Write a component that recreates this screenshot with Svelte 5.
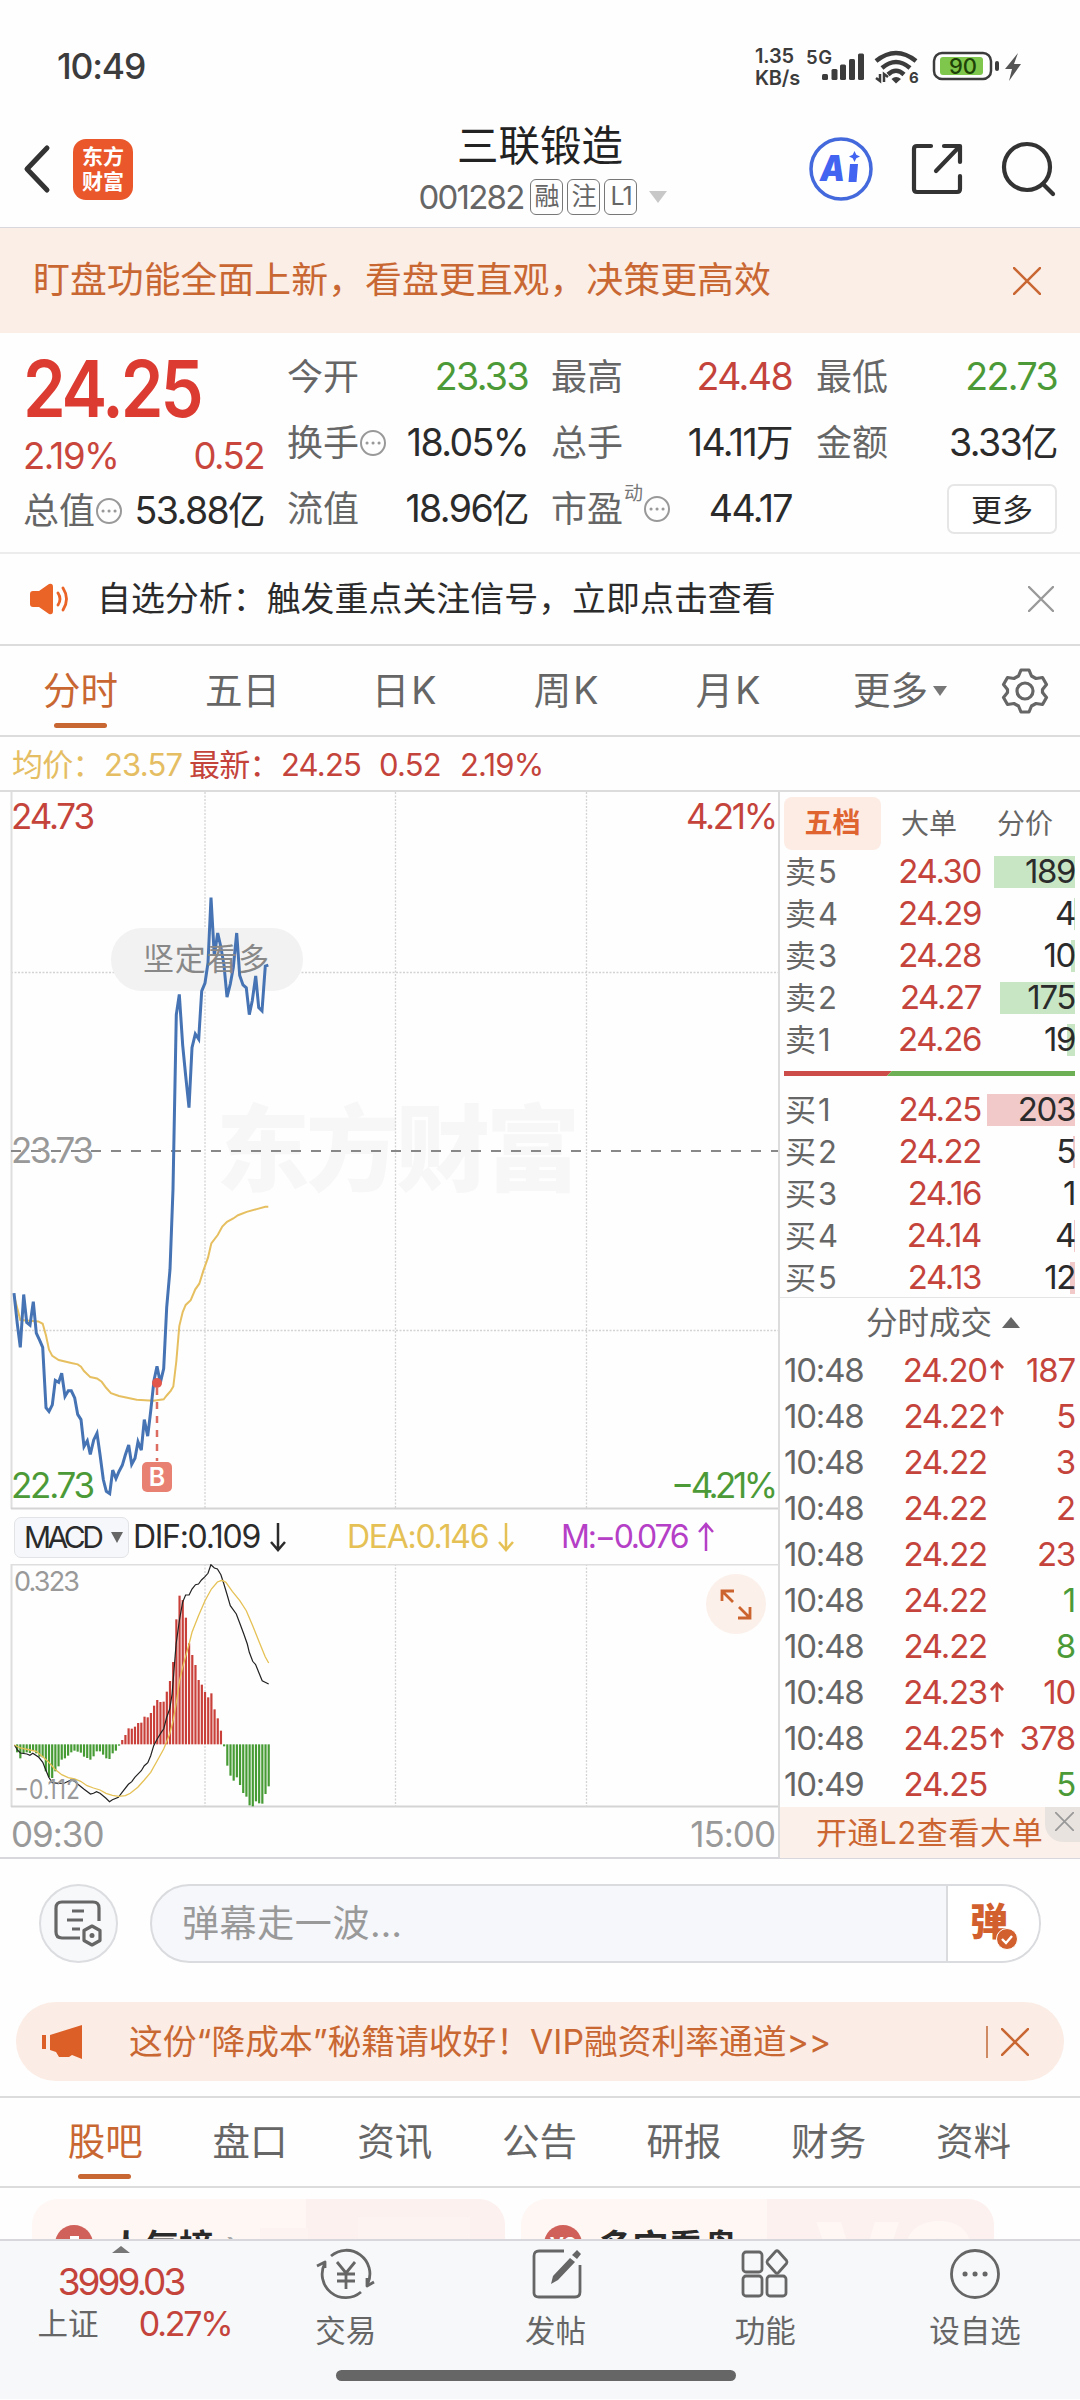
<script>
  const quote = [
    { label: '今开', value: '23.33', tone: 'down', col: 'a' },
    { label: '最高', value: '24.48', tone: 'up', col: 'b' },
    { label: '最低', value: '22.73', tone: 'down', col: 'c' },
    { label: '换手', value: '18.05%', tone: '', col: 'a', info: true },
    { label: '总手', value: '14.11万', tone: '', col: 'b' },
    { label: '金额', value: '3.33亿', tone: '', col: 'c' },
    { label: '流值', value: '18.96亿', tone: '', col: 'a' },
    { label: '市盈', value: '44.17', tone: '', col: 'b', sup: '动', info: true }
  ];
  const periods = ['分时', '五日', '日K', '周K', '月K'];
  const sells = [
    ['卖5', '24.30', '189', 81], ['卖4', '24.29', '4', 1], ['卖3', '24.28', '10', 4],
    ['卖2', '24.27', '175', 75], ['卖1', '24.26', '19', 8]
  ];
  const buys = [
    ['买1', '24.25', '203', 88], ['买2', '24.22', '5', 2], ['买3', '24.16', '1', 0],
    ['买4', '24.14', '4', 1], ['买5', '24.13', '12', 5]
  ];
  const trades = [
    ['10:48', '24.20', true, '187', 'up'], ['10:48', '24.22', true, '5', 'up'],
    ['10:48', '24.22', false, '3', 'up'], ['10:48', '24.22', false, '2', 'up'],
    ['10:48', '24.22', false, '23', 'up'], ['10:48', '24.22', false, '1', 'down'],
    ['10:48', '24.22', false, '8', 'down'], ['10:48', '24.23', true, '10', 'up'],
    ['10:48', '24.25', true, '378', 'up'], ['10:49', '24.25', false, '5', 'down']
  ];
  const tabs = ['股吧', '盘口', '资讯', '公告', '研报', '财务', '资料'];

  // Series are stored in compact units and scaled to the plot.
  const scale = (pts, fx, fy) =>
    pts.split(' ').map((p) => {
      const [x, y] = p.split(',').map(Number);
      return `${fx(x).toFixed(1)},${fy(y).toFixed(1)}`;
    }).join(' ');
  const px = (x) => x / 3;
  const py = (y) => y / 2.119 - 1.5;
  const price = scale('42,1065 52,1130 61,1180 71,1068 80,1127 90,1133 100,1083 109,1150 119,1165 128,1180 138,1308 147,1316 157,1302 166,1250 176,1254 185,1235 195,1284 205,1272 214,1272 224,1287 233,1322 243,1333 252,1390 262,1378 271,1407 281,1376 291,1362 300,1407 310,1460 319,1485 329,1490 338,1440 348,1458 357,1443 367,1430 376,1408 386,1387 395,1428 405,1415 414,1380 424,1398 433,1333 443,1368 452,1315 462,1250 471,1220 481,1255 491,1225 500,1095 510,1015 519,845 529,475 538,432 548,540 557,605 567,672 576,545 586,516 596,527 605,425 615,408 624,365 633,227 643,350 653,302 662,330 672,370 681,438 691,410 700,375 710,302 719,392 729,412 739,418 748,475 757,445 767,393 776,460 786,467 796,372 805,370', px, py);
  const average = scale('42,1070 61,1122 115,1125 128,1130 138,1155 147,1185 157,1198 176,1207 214,1213 233,1216 243,1221 252,1230 271,1243 291,1246 305,1253 319,1266 333,1277 357,1283 410,1291 460,1293 491,1290 500,1282 512,1272 520,1263 529,1210 538,1135 548,1105 557,1090 572,1080 586,1057 598,1045 610,1018 624,990 634,960 653,942 667,924 681,914 700,907 714,900 740,893 770,887 796,882 805,882', px, py);
  const mx = (x) => x / 2.01;
  const my = (y) => (y - 190) / 3;
  const dif = scale('29,733 35,748 41,757 54,760 60,764 66,758 78,770 86,785 92,808 98,830 105,846 118,848 130,847 143,838 150,842 156,850 169,866 182,880 188,878 194,873 201,878 213,893 220,903 226,897 238,890 245,876 258,851 265,843 271,830 284,810 290,795 297,786 303,765 309,735 316,715 325,693 329,685 335,650 341,625 346,580 350,505 354,430 361,355 367,305 373,283 380,283 386,265 393,252 399,250 405,238 412,228 418,218 424,192 431,202 437,205 444,222 450,250 456,280 463,315 475,340 482,368 490,400 497,430 501,455 508,482 514,492 520,515 527,540 540,550', mx, my);
  const dea = scale('29,733 41,742 60,748 73,752 86,768 98,785 110,805 124,822 137,831 150,835 162,842 175,855 188,862 201,868 213,878 226,884 239,887 252,885 262,878 277,860 290,838 303,815 316,780 329,745 341,700 348,660 354,610 361,540 367,500 380,430 386,395 399,345 412,300 425,265 437,244 446,239 454,245 467,272 482,300 495,330 508,375 520,420 533,468 540,487', mx, my);
  const zero = 731;
  const bars = [755, 773, 757, 755, 757, 750, 758, 768, 770, 812, 830, 832, 812, 797, 777, 773, 765, 755, 750, 753, 756, 768, 772, 777, 767, 752, 752, 762, 773, 775, 758, 750, 735, 718, 703, 683, 684, 678, 667, 666, 648, 650, 637, 615, 598, 604, 603, 573, 541, 484, 356, 285, 298, 351, 428, 463, 493, 538, 552, 574, 590, 578, 626, 653, 690, 737, 795, 825, 840, 830, 853, 877, 888, 914, 917, 902, 908, 909, 880, 857]
    .map((v, i) => ({ x: (34.5 + i * 6.4) / 2.01 - 1.1, y: my(Math.min(v, zero)), h: Math.abs(v - zero) / 3, up: v < zero }));
</script>

{#snippet cross(size)}
  <svg class="cross" width={size} height={size} viewBox="0 0 26 26"><path d="M1 1L25 25M25 1L1 25" /></svg>
{/snippet}
{#snippet info()}
  <svg class="info" width="28" height="28" viewBox="0 0 28 28"><circle cx="14" cy="14" r="12" /><path d="M8 14h.1M14 14h.1M20 14h.1" /></svg>
{/snippet}

<div class="screen">
  <div class="status">
    <span class="clock">10:49</span>
    <div class="net"><span>1.35</span><span>KB/s</span></div>
    <svg class="signals" width="222" height="44" viewBox="0 0 222 44">
      <g class="ink">
        <text x="-1" y="20" font-size="18.500" font-weight="600" textLength="26">5G</text>
        <rect x="15" y="30" width="6" height="6" rx="1.5" /><rect x="24.5" y="25" width="6" height="11" rx="1.5" />
        <rect x="33" y="20.500" width="6" height="15.500" rx="1.5" /><rect x="42" y="15" width="6" height="21" rx="1.500" /><rect x="51" y="9.500" width="6" height="26.500" rx="1.500" />
      </g>
      <g class="wave"><path d="M69 17Q89 1 109 17" /><path d="M75 24Q89 12 103 24" /><path d="M81 30.500Q89 23 97 30.500" /></g>
      <path class="ink" d="M84.500 35Q89 31 94 35L89 39.500z" />
      <path class="thin" d="M73 30v7l-4-3M77 38v-8l4 3" />
      <text class="ink" x="102" y="39" font-size="15" font-weight="700">6</text>
      <rect class="case" x="127" y="9" width="57" height="26" rx="8" />
      <rect class="charge" x="133" y="13" width="43" height="18" rx="3" />
      <text class="level" x="142" y="30" font-size="22" textLength="28">90</text>
      <rect class="ink" x="188" y="17" width="4" height="10" rx="2" />
      <path class="bolt" d="M211 9L198 25h7l-3 12L214 20h-7z" />
    </svg>
  </div>

  <header class="head">
    <svg width="30" height="50" viewBox="0 0 30 50"><path class="stroke heavy" d="M26 4L6 25L26 46" /></svg>
    <div class="brand"><span>东方</span><span>财富</span></div>
    <div class="title">
      <h1>三联锻造</h1>
      <div class="code"><span>001282</span><i>融</i><i>注</i><i class="lv">L1</i><b></b></div>
    </div>
    <svg class="ai" width="66" height="66" viewBox="0 0 66 66">
      <circle cx="33" cy="33" r="30" />
      <text x="12" y="45" font-size="35" textLength="25" lengthAdjust="spacingAndGlyphs">A</text>
      <path d="M42 28h8l-1.500 18h-8zM46.500 15l1.800 3.700 3.700 1.800-3.700 1.800-1.800 3.700-1.800-3.700-3.700-1.800 3.700-1.800z" />
    </svg>
    <svg class="out" width="52" height="52" viewBox="0 0 52 52"><path class="stroke" d="M20 3H6Q3 3 3 6V46Q3 49 6 49H46Q49 49 49 46V33M33 3H49V19M48 4L25 28" /></svg>
    <svg class="find" width="56" height="56" viewBox="0 0 56 56"><circle class="stroke" cx="26" cy="26" r="23" /><path class="stroke" d="M42 43L52 53" /></svg>
  </header>

  <div class="promo"><span>盯盘功能全面上新，看盘更直观，决策更高效</span>{@render cross(28)}</div>

  <section class="quote">
    <div class="last">
      <strong>24.25</strong>
      <div class="chg"><span>2.19%</span><span>0.52</span></div>
      <div class="cell"><span class="label">总值</span>{@render info()}<span class="val">53.88亿</span></div>
    </div>
    <div class="grid">
      {#each quote as q}
        <div class="cell {q.col}">
          <span class="label">{q.label}</span>{#if q.sup}<sup>{q.sup}</sup>{/if}{#if q.info}{@render info()}{/if}
          <span class="val {q.tone}">{q.value}</span>
        </div>
      {/each}
      <button>更多</button>
    </div>
  </section>

  <div class="notice">
    <svg width="40" height="34" viewBox="0 0 40 34"><path class="orange" d="M3 9h6L19 2q4-1 4 3v24q0 4-4 3L9 25H3q-3 0-3-3v-10q0-3 3-3z" /><path class="waves" d="M28 11q4 6 0 12M33 6q7 11 0 22" /></svg>
    <span>自选分析：触发重点关注信号，立即点击查看</span>
    {@render cross(26)}
  </div>

  <nav class="periods">
    {#each periods as p, i}<span class:on={i === 0}>{p}</span>{/each}
    <span class="more">更多<b></b></span>
    <svg width="50" height="50" viewBox="0 0 50 50"><path class="gear" d="M21 4h8l2.500 6 4.500 2.500 6.500-1 4 7-4 5v3l4 5-4 7-6.500-1-4.500 2.500-2.500 6h-8l-2.500-6-4.500-2.500-6.500 1-4-7 4-5v-3l-4-5 4-7 6.500 1 4.500-2.500z" /><circle class="gear" cx="25" cy="25" r="8" /></svg>
  </nav>

  <div class="legend"><span class="avg">均价：</span><span class="avg n1">23.57</span><span>最新：</span><span class="n2">24.25</span><span class="n3">0.52</span><span class="n4">2.19%</span></div>

  <main class="market">
    <div class="charts">
      <svg class="plot" width="778" height="718" viewBox="0 0 778 718">
        <text class="mark" x="216" y="392" font-size="94" textLength="364">东方财富</text>
        <path class="dots" d="M205 0V717M395.500 0V717M586.500 0V717M11 180.500H778M11 538.500H778" />
        <path class="frame" d="M11.500 0V717" /><path class="frame base" d="M11 716.500H778" />
        <path class="mid" d="M11 359H778" />
        <rect class="pill" x="111" y="136" width="192" height="63" rx="31" />
        <polyline class="avgline" points={average} />
        <polyline class="priceline" points={price} />
        <text class="bull" x="143" y="178" font-size="31" textLength="126">坚定看多</text>
        <g class="buy"><circle cx="157" cy="591" r="5" /><path d="M157 596V669" /><rect x="142" y="670" width="30" height="30" rx="5" /><text x="157" y="694" font-size="25">B</text></g>
        <text class="up" x="11" y="37" font-size="35" textLength="84">24.73</text>
        <text class="up" x="686" y="37" font-size="35" textLength="92">4.21%</text>
        <text class="grey" x="11" y="371" font-size="35" textLength="83">23.73</text>
        <text class="down" x="11" y="706" font-size="35" textLength="84">22.73</text>
        <text class="down" x="671" y="706" font-size="35" textLength="107">−4.21%</text>
      </svg>
      <div class="macd">
        <span class="pick">MACD<b></b></span>
        <span class="dif">DIF:0.109<svg width="16" height="30" viewBox="0 0 16 30"><path d="M8 1V28M1 20L8 28L15 20" /></svg></span>
        <span class="dea">DEA:0.146<svg width="16" height="30" viewBox="0 0 16 30"><path d="M8 1V28M1 20L8 28L15 20" /></svg></span>
        <span class="m">M:−0.076<svg width="16" height="30" viewBox="0 0 16 30"><path d="M8 29V2M1 10L8 2L15 10" /></svg></span>
      </div>
      <svg class="plot" width="778" height="244" viewBox="0 0 778 244">
        <path class="dots" d="M205 0V243M395.500 0V243M586.500 0V243" />
        <path class="frame" d="M778 .5H11.500V243" /><path class="frame base" d="M11 242.500H778" />
        {#each bars as b}<rect class={b.up ? 'rise' : 'fall'} x={b.x} y={b.y} width="2.200" height={b.h} />{/each}
        <polyline class="difline" points={dif} /><polyline class="dealine" points={dea} />
        <text class="grey" x="14" y="27" font-size="27" textLength="66">0.323</text>
        <text class="grey" x="14" y="235" font-size="27" textLength="66" lengthAdjust="spacingAndGlyphs">−0.112</text>
        <circle class="zoom" cx="736" cy="40" r="30" />
        <path class="arrows" d="M722 37V27H734M723 28L733 38M750 43V54H738M749 53L739 43" />
      </svg>
      <div class="axis"><span>09:30</span><span>15:00</span></div>
    </div>

    <aside class="book">
      <div class="modes"><b>五档</b><span>大单</span><span>分价</span></div>
      {#each sells as [n, p, v, w]}
        <div class="lvl sell"><span>{n}</span><em>{p}</em><strong><i style="width:{w}px"></i><u>{v}</u></strong></div>
      {/each}
      <svg class="ratio" width="291" height="5" viewBox="0 0 291 5"><path fill="#cb4c48" d="M0 0H108L103 5H0z" /><path fill="#6daf55" d="M108 0H291V5H103z" /></svg>
      {#each buys as [n, p, v, w]}
        <div class="lvl"><span>{n}</span><em>{p}</em><strong><i style="width:{w}px"></i><u>{v}</u></strong></div>
      {/each}
      <div class="deal">分时成交<b></b></div>
      {#each trades as [t, p, a, v, tone]}
        <div class="trade"><span>{t}</span><em>{p}</em><svg width="16" height="22" viewBox="0 0 16 22">{#if a}<path d="M8 21V3M2 9L8 2.500L14 9" />{/if}</svg><strong class={tone}>{v}</strong></div>
      {/each}
      <div class="l2">开通L2查看大单<span>{@render cross(19)}</span></div>
    </aside>
  </main>

  <div class="chat">
    <span class="round"><svg width="52" height="50" viewBox="0 0 52 50"><path class="note" d="M46 22V9q0-6-6-6H9Q3 3 3 9v24q0 6 6 6h18M19 12h12M14 21h16M19 30h8" /><path class="note" d="M39 27l8 4.500v10L39 46l-8-4.500v-10z" /><circle cx="39" cy="36.500" r="2.500" fill="#666" /></svg></span>
    <div class="input"><span>弹幕走一波…</span><b>弹<svg width="22" height="22" viewBox="0 0 22 22"><circle cx="11" cy="11" r="10.500" fill="#d2602e" stroke="#fff" /><path d="M6 11l4 4 6-7" fill="none" stroke="#fff" stroke-width="2.400" /></svg></b></div>
  </div>

  <div class="vip">
    <svg width="42" height="36" viewBox="0 0 42 36"><path fill="#dc5f28" d="M0 11h4v14H0zM8 11L40 1v34L30 31l-3 2H17l-3-5-6-2z" /></svg>
    <span>这份<q>“</q>降成本<q>”</q>秘籍请收好！VIP融资利率通道&gt;&gt;</span><i></i>{@render cross(28)}
  </div>

  <nav class="tabs">{#each tabs as t, i}<span class:on={i === 0}>{t}</span>{/each}</nav>

  <div class="cards">
    <div class="card rank"><i><svg width="16" height="16" viewBox="0 0 16 16"><path fill="#fff" d="M4 0h9v8h3v8H0V6h4z" /></svg></i><b>人气榜</b><span>›</span><svg class="podium" width="210" height="90" viewBox="0 0 210 90"><path d="M0 29H48V90H0zM98 18H210V90H98z" /></svg></div>
    <div class="card vs"><i>VS</i><b>多空看盘</b><em>VS</em></div>
  </div>

  <footer>
    <div class="index"><b></b><strong>3999.03</strong><p><span>上证</span><em>0.27%</em></p></div>
    <div class="item">
      <svg width="58" height="52" viewBox="0 0 58 52"><path d="M14 8A23.500 23.500 0 0 1 51 35M44 44A23.500 23.500 0 0 1 8 15M0 18l8-4v6M50 30v8l7-4M20 14l9 11 9-11M29 25v16M20 26h18M20 33h18" /></svg>
      <span>交易</span>
    </div>
    <div class="item">
      <svg width="50" height="52" viewBox="0 0 50 52"><path d="M33 3H8Q3 3 3 8v37q0 4 5 4h36q5 0 5-5V17" /><path class="solid" d="M39 10l5 4L27 32l-7 4 2-8zM41 7l5-5 4 4-4 5z" /></svg>
      <span>发帖</span>
    </div>
    <div class="item">
      <svg width="48" height="52" viewBox="0 0 48 52"><rect x="2" y="4" width="19" height="20" rx="3" /><rect x="2" y="28" width="19" height="20" rx="3" /><rect x="26" y="28" width="19" height="20" rx="3" /><path d="M34.500 3.500q1.500-1.500 3 0l8 9q1 1.500 0 3l-8 9q-1.500 1.500-3 0l-8-9q-1-1.500 0-3z" /></svg>
      <span>功能</span>
    </div>
    <div class="item">
      <svg width="52" height="52" viewBox="0 0 52 52"><circle cx="26" cy="26" r="23.500" /><path class="dot3" d="M16 26h.1M26 26h.1M36 26h.1" /></svg>
      <span>设自选</span>
    </div>
    <div class="home"></div>
  </footer>
</div>

<style>
  :global(body) { background: #fff; }
  .screen { width: 1080px; height: 2400px; overflow: hidden; display: flex; flex-direction: column; background: #fefefe; color: #2b2b2b; font-family: Inter, "Noto Sans CJK SC", sans-serif; line-height: 1; box-sizing: border-box; }
  .screen :global(*) { box-sizing: border-box; flex-shrink: 0; }
  i, em { font-style: normal; }
  u { text-decoration: none; }
  svg { display: block; }
  svg text { font-family: Inter, "Noto Sans CJK SC", sans-serif; }
  .up { color: #c4433b; fill: #c4433b; }
  .down { color: #4b9a37; fill: #4b9a37; }
  .cross path { fill: none; stroke: currentColor; stroke-width: 2.4; stroke-linecap: round; }

  .status { height: 106px; display: flex; padding: 0 54px 0 57px; color: #3c3c3c; }
  .clock { width: 698px; padding-top: 49px; font-size: 35.500px; font-weight: 500; letter-spacing: -1.200px; }
  .net { width: 52px; padding-top: 46px; display: flex; flex-direction: column; gap: 2px; font-size: 20px; font-weight: 600; letter-spacing: -.2px; }
  .signals { margin-top: 44px; }
  .ink { fill: #3c3c3c; }
  .wave path { fill: none; stroke: #3c3c3c; stroke-width: 4.500; }
  .thin { fill: none; stroke: #3c3c3c; stroke-width: 2.500; }
  .case { fill: none; stroke: #3c3c3c; stroke-width: 2.500; }
  .charge { fill: #7fc74c; }
  .level { fill: #1e4207; font-weight: 500; }
  .bolt { fill: #555; }

  .head { height: 121px; display: flex; align-items: center; padding: 7px 26px 2px 21px; border-bottom: 0; }
  .stroke { fill: none; stroke: #333; stroke-width: 4.200; stroke-linecap: round; stroke-linejoin: round; }
  .heavy { stroke-width: 5; }
  .brand { width: 60px; height: 61px; margin-left: 22px; border-radius: 13px; background: #e9572b; color: #fff; display: flex; flex-direction: column; align-items: center; justify-content: center; gap: 4px; font-size: 21px; font-weight: 700; }
  .title { width: 320px; margin-left: 247px; display: flex; flex-direction: column; align-items: center; padding-top: 3px; }
  h1 { margin: 0; font-size: 41.500px; font-weight: 400; line-height: 50px; color: #222; white-space: nowrap; }
  .code { display: flex; align-items: center; height: 46px; gap: 4px; color: #666; font-size: 33px; margin-top: 3px; padding-left: 6px; }
  .code span { letter-spacing: -1.800px; margin-right: 3px; }
  .code i { width: 33px; height: 36px; border: 1.5px solid #777; border-radius: 6px; font-size: 25px; line-height: 32px; text-align: center; }
  .code .lv { letter-spacing: -1px; }
  .code b { margin-left: 8px; border: 9px solid transparent; border-top: 12px solid #c8c8c8; border-bottom: 0; }
  .ai { margin-left: 108px; }
  .ai circle { fill: #fff; stroke: #4469dc; stroke-width: 3.500; }
  .ai text, .ai path { fill: #4364f0; font-weight: 900; font-style: italic; }
  .out { margin-left: 37px; }
  .find { margin-left: 38px; }

  .promo { height: 106px; border-top: 1.500px solid #d8d8dc; background: #fbeee6; color: #c96733; display: flex; align-items: center; justify-content: space-between; padding: 0 39px 0 33px; font-size: 36.900px; }

  .quote { height: 221px; padding: 14px 0 0 23px; display: flex; border-bottom: 2px solid #ececec; }
  .last { width: 264px; }
  .last strong { display: block; width: max-content; height: 80px; padding-top: 4px; font-size: 78px; line-height: 76px; font-weight: 600; color: #dc3b32; letter-spacing: -3.500px; transform: scaleX(.88); transform-origin: 0 0; }
  .chg { height: 50px; display: flex; align-items: center; justify-content: space-between; width: 241px; padding-top: 8px; color: #c9463d; font-size: 36.500px; letter-spacing: -1.500px; }
  .last .cell { width: 241px; padding-top: 4px; height: 63px; }
  .grid { width: 770px; display: grid; grid-template-columns: 264px 265px 241px; grid-auto-rows: 66px; }
  .grid { margin-top: -3px; }
  .cell { display: flex; align-items: center; font-size: 37.500px; white-space: nowrap; }
  .cell.a { width: 241px; }
  .cell.b { width: 241px; }
  .label { color: #666; font-size: 36px; }
  sup { font-size: 19px; color: #777; margin: -32px 0 0 1px; line-height: 19px; }
  .val { margin-left: auto; letter-spacing: -1.600px; }
  .info circle { fill: none; stroke: #999; stroke-width: 2; }
  .info path { stroke: #999; stroke-width: 3; stroke-linecap: round; }
  .quote button { justify-self: end; align-self: center; width: 110px; height: 50px; border: 2px solid #e6e6e6; border-radius: 7px; background: #fff; color: #2b2b2b; font: 31px/1 Inter, "Noto Sans CJK SC", sans-serif; padding: 0; }

  .notice { height: 90px; display: flex; align-items: center; padding: 0 26px 0 30px; font-size: 33.950px; }
  .notice span { flex: 1; margin-left: 27px; }
  .notice :global(.cross) { color: #999; }
  .orange { fill: #ea6327; }
  .waves { fill: none; stroke: #ea6327; stroke-width: 2.800; stroke-linecap: round; }

  .periods { height: 93px; border-top: 2px solid #dcdcdc; border-bottom: 2px solid #dcdcdc; display: flex; align-items: center; font-size: 37.500px; color: #666; padding-top: 1px; }
  .periods span { width: 163px; text-align: center; position: relative; }
  .periods span:first-child { width: 161px; }
  .periods span:nth-child(n + 3) { width: 162px; letter-spacing: 2px; }
  .periods .more { width: 163px; display: flex; justify-content: flex-end; align-items: center; gap: 5px; margin-left: -25px; }
  .periods .more { letter-spacing: 0 !important; }
  .more b { border: 7px solid transparent; border-top: 10px solid #777; border-bottom: 0; }
  .periods svg { margin-left: 53px; }
  .gear { fill: none; stroke: #666; stroke-width: 3.200; stroke-linejoin: round; }
  .on { color: #c96733; }
  .on::after { content: ""; position: absolute; left: 50%; bottom: -18px; width: 53px; height: 5px; margin-left: -27px; border-radius: 3px; background: #c96733; }

  .legend { height: 53px; display: flex; align-items: center; padding-left: 12px; font-size: 31px; color: #c4433b; letter-spacing: -.8px; white-space: nowrap; padding-top: 1px; }
  .legend .avg { color: #e5bd62; }
  .legend span { width: 92px; }
  .legend .n1 { width: 85px; }
  .legend .n2 { width: 98px; }
  .legend .n3 { width: 81px; }

  .market { height: 1069px; display: flex; border-top: 2px solid #dcdcdc; border-bottom: 2px solid #d8d8dc; }
  .charts { width: 778px; }
  .mark { fill: #f7f7f7; font-weight: 900; }
  .dots { fill: none; stroke: #d3d3d3; stroke-width: 1.300; stroke-dasharray: 2 1.500; }
  .frame { fill: none; stroke: #dedede; stroke-width: 2; }
  .base { stroke: #d4d4d4; }
  .mid { stroke: #888; stroke-width: 2; stroke-dasharray: 10 10; }
  .pill { fill: #f2f2f2; }
  .bull { fill: #888; }
  .avgline { fill: none; stroke: #e6bf60; stroke-width: 2; }
  .priceline { fill: none; stroke: #4573b3; stroke-width: 3; }
  .buy circle { fill: #e2564b; }
  .buy path { stroke: #dc6b60; stroke-width: 2.500; stroke-dasharray: 7 7; }
  .buy rect { fill: #e98172; }
  .buy text { fill: #fff; text-anchor: middle; font-weight: 600; }
  .grey { fill: #999; }
  .macd { height: 54px; display: flex; align-items: center; padding-left: 14px; font-size: 32px; letter-spacing: -1.300px; white-space: nowrap; }
  .macd span { display: flex; align-items: center; gap: 10px; }
  .macd svg path { fill: none; stroke: currentColor; stroke-width: 2.500; }
  .macd .pick { width: 115px; height: 41px; background: #f6f7fa; border: 1px solid #e2e3e6; border-radius: 7px; gap: 9px; padding-left: 9px; font-size: 30px; letter-spacing: -3.500px; }
  .pick b { border: 6px solid transparent; border-top: 11px solid #666; border-bottom: 0; margin-left: 2px; }
  .dif { width: 214px; padding-left: 4px; }
  .dea { width: 215px; padding-left: 4px; color: #e5c155; }
  .m { color: #b53fc6; padding-left: 3px; letter-spacing: -2.200px; }
  .rise { fill: #c9403a; }
  .fall { fill: #479b35; }
  .difline { fill: none; stroke: #222; stroke-width: 1.200; }
  .dealine { fill: none; stroke: #e5c155; stroke-width: 1.300; }
  .zoom { fill: #fbf0ea; }
  .arrows { fill: none; stroke: #cc6430; stroke-width: 2.800; }
  .axis { height: 50px; display: flex; justify-content: space-between; align-items: center; padding: 0 3px 0 11px; margin-top: 1px; color: #999; font-size: 35px; letter-spacing: -1px; }

  .book { width: 302px; border-left: 2px solid #dcdcdc; }
  .modes { height: 58px; display: flex; align-items: center; padding: 5px 0 0 4px; font-size: 28px; color: #666; }
  .modes b { width: 97px; height: 53px; border-radius: 8px; background: #fcece4; color: #df6430; text-align: center; line-height: 52px; }
  .modes span { width: 96px; text-align: center; }
  .lvl { height: 42px; display: grid; grid-template-columns: 95px 102px 94px; align-items: center; margin-left: 4px; font-size: 33px; letter-spacing: -1.400px; }
  .lvl span { color: #666; padding-left: 1px; font-size: 31px; letter-spacing: 2px; }
  .lvl em { color: #c4433b; text-align: right; }
  .lvl strong { font-weight: 400; height: 32px; display: grid; align-items: center; justify-items: end; }
  .lvl i { grid-area: 1 / 1; height: 32px; background: #f1c9c9; }
  .lvl.sell i { background: #c8e6c4; }
  .lvl u { grid-area: 1 / 1; }
  .ratio { margin: 11px 0 12px 4px; }
  .deal { height: 50px; border-top: 1.500px solid #e4e4e4; display: flex; align-items: center; justify-content: center; gap: 10px; font-size: 31.500px; color: #666; margin-top: -1px; padding-left: 26px; }
  .deal b { border: 9px solid transparent; border-bottom: 11px solid #666; border-top: 0; }
  .trade { height: 46px; display: flex; align-items: center; padding-left: 4px; font-size: 33px; letter-spacing: -1.200px; color: #666; }
  .trade em { width: 118px; text-align: right; color: #c4433b; }
  .trade span { width: 85px; }
  .trade svg { margin-left: 2px; }
  .trade svg path { fill: none; stroke: #c4433b; stroke-width: 2.800; }
  .trade strong { font-weight: 400; width: 70px; text-align: right; }
  .l2 { height: 51px; background: #fcf0ea; color: #cb6531; font-size: 31px; line-height: 51px; padding-left: 36px; position: relative; white-space: nowrap; letter-spacing: .6px; }
  .l2 span { position: absolute; right: 0; top: 0; width: 35px; height: 35px; background: #e9e3e0; border-bottom-left-radius: 18px; color: #999; padding: 5px 0 0 10px; }

  .chat { height: 129px; padding: 25px 39px 0 39px; display: flex; justify-content: space-between; }
  .round { width: 79px; height: 79px; border-radius: 50%; border: 2px solid #dcdde0; background: #f7f8fa; display: grid; place-items: center; }
  .note { fill: none; stroke: #666; stroke-width: 3.200; stroke-linejoin: round; }
  .input { width: 891px; height: 79px; border: 2px solid #dadbde; border-radius: 40px; background: #f6f7fa; display: flex; overflow: hidden; }
  .input span { width: 796px; border-right: 2px solid #dadbde; padding-left: 30px; line-height: 75px; font-size: 37px; letter-spacing: .6px; color: #999; }
  .input b { flex: 1; background: #fff; color: #d2602e; font-size: 38px; font-weight: 900; line-height: 71px; padding-left: 22px; display: flex; position: relative; }
  .input b svg { position: absolute; left: 48px; top: 42px; }

  .vip { height: 79px; margin: 14px 16px 0; border-radius: 40px; background: #fbede5; color: #c96733; display: flex; align-items: center; padding: 0 33px 0 26px; font-size: 33.750px; white-space: nowrap; }
  .vip span { margin-left: 45px; width: 857px; }
  .vip q { quotes: none; font-family: Inter, sans-serif; }
  .vip q::before, .vip q::after { content: none; }
  .vip i { width: 2px; height: 32px; background: #d08a63; margin-right: 13px; }

  .tabs { height: 92px; margin-top: 15px; border-top: 2px solid #dcdcdc; border-bottom: 2px solid #dcdcdc; display: flex; align-items: center; padding-left: 33px; font-size: 37.500px; color: #666; }
  .tabs span { width: 144.700px; text-align: center; position: relative; }

  .cards { height: 51px; padding: 11px 0 0 32px; display: flex; gap: 16px; overflow: hidden; }
  .card { width: 473px; height: 120px; border-radius: 26px 26px 0 0; background: linear-gradient(90deg, #fef7f4 58%, #fcf1ef 58%); display: flex; padding: 26px 0 0 23px; overflow: hidden; }
  .card.vs { background: linear-gradient(90deg, #fef7f4 52%, #fcf1ef 52%); }
  .card i { width: 38px; height: 38px; border-radius: 50%; background: #d0615a; color: #fff; display: grid; place-items: center; font-size: 19px; font-weight: 700; }
  .card b { font-size: 35px; line-height: 40px; margin: 2px 12px 0 16px; color: #2a2a2a; }
  .card span { color: #aaa; font-size: 36px; }
  .podium { margin: -26px 0 0 20px; }
  .podium path:first-child { fill: #fdf3f0; }
  .card em { margin: -8px 0 0 64px; font-size: 110px; font-weight: 900; line-height: 90px; color: #fef7f4; }

  footer { height: 160px; border-top: 2px solid #d8d8dc; background: #f6f8fa; display: flex; flex-wrap: wrap; align-content: flex-start; color: #666; }
  .index { width: 241px; height: 128px; display: flex; flex-direction: column; align-items: center; }
  .index b { margin-top: 5px; border: 9px solid transparent; border-bottom: 7px solid #777; border-top: 0; }
  .index strong { font-size: 37px; font-weight: 400; color: #c4433b; letter-spacing: -3px; margin-top: 10px; }
  .index p { display: flex; margin: 6px 0 0; width: 200px; font-size: 30.500px; align-items: center; justify-content: space-between; line-height: 36px; padding-left: 16px; margin-right: -22px; width: 220px; }
  .index em { color: #c4433b; font-size: 34px; letter-spacing: -2.200px; margin-right: 10px; }
  .item { width: 209.700px; height: 128px; padding-top: 7px; display: flex; flex-direction: column; align-items: center; font-size: 30.500px; }
  .item span { margin-top: 16px; }
  .item svg { fill: none; stroke: #666; stroke-width: 2.800; stroke-linejoin: round; overflow: visible; }
  .item .solid { fill: #666; stroke: none; }
  .item .dot3 { stroke-width: 5; stroke-linecap: round; }
  .home { width: 400px; height: 11px; border-radius: 6px; background: #666; margin: 1px 0 0 336px; }
</style>
